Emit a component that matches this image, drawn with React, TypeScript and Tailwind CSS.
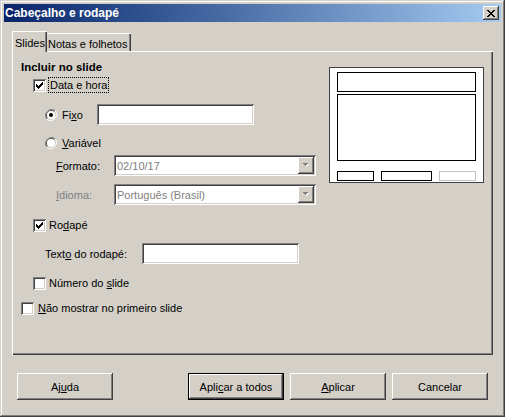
import React from 'react';

const raised =
  'shadow-[inset_-1px_-1px_0_#404040,inset_1px_1px_0_#ffffff,inset_-2px_-2px_0_#808080,inset_2px_2px_0_#d4d0c8]';
const sunken =
  'shadow-[inset_1px_1px_0_#808080,inset_-1px_-1px_0_#ffffff,inset_2px_2px_0_#404040,inset_-2px_-2px_0_#d4d0c8]';

function CheckBox({ checked }: { checked?: boolean }) {
  return (
    <div className={`w-[13px] h-[13px] shrink-0 bg-white ${sunken}`}>
      {checked && (
        <svg width="13" height="13" viewBox="0 0 13 13" shapeRendering="crispEdges">
          <path
            d="M3 5h1v3H3z M4 6h1v3H4z M5 7h1v3H5z M6 6h1v3H6z M7 5h1v3H7z M8 4h1v3H8z M9 3h1v3H9z"
            fill="#000"
          />
        </svg>
      )}
    </div>
  );
}

function Radio({ checked }: { checked?: boolean }) {
  return (
    <svg width="12" height="12" viewBox="0 0 12 12" className="shrink-0">
      <path d="M10.2 1.8A6 6 0 0 0 1.8 10.2" fill="none" stroke="#808080" strokeWidth="1" />
      <path d="M1.8 10.2A6 6 0 0 0 10.2 1.8" fill="none" stroke="#ffffff" strokeWidth="1" />
      <path d="M9.5 2.5A5 5 0 0 0 2.5 9.5" fill="none" stroke="#404040" strokeWidth="1" />
      <path d="M2.5 9.5A5 5 0 0 0 9.5 2.5" fill="none" stroke="#d4d0c8" strokeWidth="1" />
      <circle cx="6" cy="6" r="4" fill="#fff" />
      {checked && <circle cx="6" cy="6" r="2" fill="#000" />}
    </svg>
  );
}

function Field({ w }: { w: string }) {
  return <div className={`${w} h-[21px] bg-white ${sunken}`} />;
}

function Select({ value }: { value: string }) {
  return (
    <div className={`w-[202px] h-[21px] bg-white ${sunken} flex items-center p-[2px]`}>
      <span className="flex-1 pl-[1px] text-[#808080]">{value}</span>
      <div className={`w-[16px] h-[17px] bg-[#d4d0c8] ${raised} flex items-center justify-center`}>
        <svg width="7" height="5" viewBox="0 0 7 5" shapeRendering="crispEdges">
          <path d="M1 1h5v1H1z M2 2h3v1H2z M3 3h1v1H3z" fill="#ffffff" />
          <path d="M0 0h5v1H0z M1 1h3v1H1z M2 2h1v1H2z" fill="#808080" />
        </svg>
      </div>
    </div>
  );
}

function Button({ children, isDefault }: { children: React.ReactNode; isDefault?: boolean }) {
  return (
    <div
      className={`w-[96px] h-[27px] flex items-center justify-center bg-[#d4d0c8] ${
        isDefault
          ? 'shadow-[inset_0_0_0_1px_#000000,inset_-2px_-2px_0_#404040,inset_2px_2px_0_#ffffff,inset_-3px_-3px_0_#808080]'
          : raised
      }`}
    >
      {children}
    </div>
  );
}

export default function App() {
  return (
    <div className="w-[505px] h-[417px] bg-[#d4d0c8] text-[11px] leading-[14px] text-black font-['Liberation_Sans',Arial,sans-serif] shadow-[inset_-1px_-1px_0_#404040,inset_1px_1px_0_#d4d0c8,inset_-2px_-2px_0_#808080,inset_2px_2px_0_#ffffff] p-[4px] flex flex-col">
      {/* title bar */}
      <div className="h-[18px] bg-gradient-to-r from-[#0a246a] to-[#a6caf0] flex items-center pl-[1px] pr-[2px]">
        <span className="flex-1 text-white font-bold text-[12px]">Cabeçalho e rodapé</span>
        <div className={`w-[16px] h-[14px] bg-[#d4d0c8] ${raised} flex items-center justify-center`}>
          <svg width="8" height="7" viewBox="0 0 8 7" shapeRendering="crispEdges">
            <path
              d="M0 0h2v1H0z M6 0h2v1H6z M1 1h2v1H1z M5 1h2v1H5z M2 2h4v1H2z M3 3h2v1H3z M2 4h4v1H2z M1 5h2v1H1z M5 5h2v1H5z M0 6h2v1H0z M6 6h2v1H6z"
              fill="#000"
            />
          </svg>
        </div>
      </div>

      <div className="px-[8px] pt-[9px] flex flex-col">
        {/* tabs */}
        <div className="flex items-end h-[20px]">
          <div className="relative z-10 h-[21px] -mb-[1px] w-[35px] bg-[#d4d0c8] shadow-[inset_1px_1px_0_#ffffff,inset_-1px_0_0_#404040,inset_-2px_0_0_#808080] flex items-start pt-[5px] pl-[3px]">
            Slides
          </div>
          <div className="h-[18px] w-[84px] bg-[#d4d0c8] shadow-[inset_0_1px_0_#ffffff,inset_-1px_0_0_#404040,inset_-2px_0_0_#808080] flex items-start pt-[4px] pl-[1px]">
            Notas e folhetos
          </div>
        </div>

        {/* panel */}
        <div className="h-[304px] shadow-[inset_1px_1px_0_#ffffff,inset_-1px_-1px_0_#404040,inset_-2px_-2px_0_#808080] flex">
          <div className="w-[317px] pl-[9px] pt-[9px] flex flex-col">
            <div className="h-[14px] flex items-center font-bold text-[11.5px]">Incluir no slide</div>

            <div className="mt-[4px] h-[14px] flex items-center pl-[12px] gap-[3px]">
              <CheckBox checked />
              <span className="outline outline-1 outline-dotted outline-black px-[1px]">Data e hora</span>
            </div>

            <div className="mt-[12px] h-[21px] flex items-center pl-[24px]">
              <Radio checked />
              <span className="ml-[5px] w-[35px]">
                Fi<u>x</u>o
              </span>
              <Field w="w-[157px]" />
            </div>

            <div className="mt-[11px] h-[14px] flex items-center pl-[24px]">
              <Radio />
              <span className="ml-[5px]">
                <u>V</u>ariável
              </span>
            </div>

            <div className="mt-[5px] h-[21px] flex items-center pl-[35px]">
              <span className="w-[58px]">
                <u>F</u>ormato:
              </span>
              <Select value="02/10/17" />
            </div>

            <div className="mt-[8px] h-[21px] flex items-center pl-[35px]">
              <span className="w-[58px] text-[#808080]">
                <u>I</u>dioma:
              </span>
              <Select value="Português (Brasil)" />
            </div>

            <div className="mt-[13px] h-[14px] flex items-center pl-[12px] gap-[3px]">
              <CheckBox checked />
              <span>
                Ro<u>d</u>apé
              </span>
            </div>

            <div className="mt-[11px] h-[21px] flex items-center pl-[24px]">
              <span className="w-[97px]">
                Text<u>o</u> do rodapé:
              </span>
              <Field w="w-[157px]" />
            </div>

            <div className="mt-[12px] h-[14px] flex items-center pl-[12px] gap-[3px]">
              <CheckBox />
              <span>
                Número do <u>s</u>lide
              </span>
            </div>

            <div className="mt-[11px] h-[14px] flex items-center gap-[4px]">
              <CheckBox />
              <span>
                <u>N</u>ão mostrar no primeiro slide
              </span>
            </div>
          </div>

          {/* preview */}
          <div className="pt-[16px]">
            <div className="w-[155px] h-[116px] bg-white border border-[#404040] flex flex-col px-[7px] pt-[4px]">
              <div className="h-[20px] border border-black" />
              <div className="mt-[2px] h-[67px] border border-black" />
              <div className="mt-[10px] flex justify-between">
                <div className="w-[37px] h-[10px] border border-black" />
                <div className="w-[51px] h-[10px] border border-black" />
                <div className="w-[37px] h-[10px] border border-[#c0c0c0]" />
              </div>
            </div>
          </div>
        </div>
      </div>

      {/* buttons */}
      <div className="mt-[18px] flex pl-[13px] pr-[13px]">
        <Button>
          Aj<u>u</u>da
        </Button>
        <div className="flex-1" />
        <div className="flex gap-[6px]">
          <Button isDefault>
            Apli<u>c</u>ar a todos
          </Button>
          <Button>
            <u>A</u>plicar
          </Button>
          <Button>Cancelar</Button>
        </div>
      </div>
    </div>
  );
}
